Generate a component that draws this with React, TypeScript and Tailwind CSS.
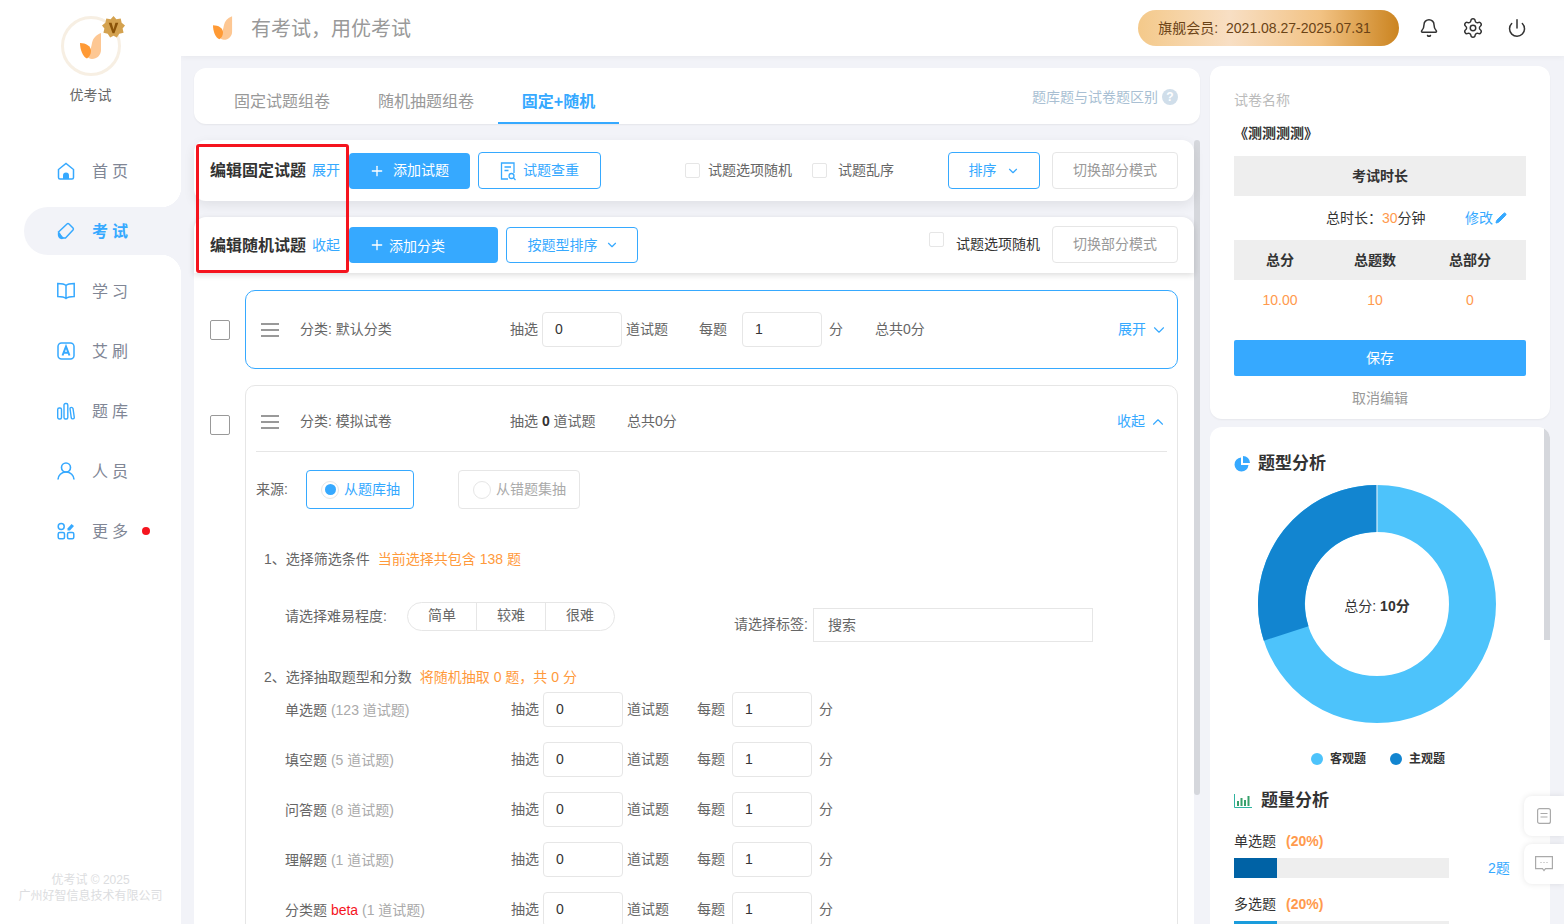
import { Bell, ChevronDown, ChevronUp, Pencil, Plus, Power, Settings } from "lucide-react";

const FONT = "font-['Liberation_Sans','Noto_Sans_CJK_SC',sans-serif]";

function Leaf({ w = 22, h = 26 }: { w?: number; h?: number }) {
  return (
    <svg width={w} height={h} viewBox="0 0 22 26">
      <path d="M21 0c-5 2-8 5-9 10-.7 4-1.500 8-5 13 1 2 3 3 5 3 5 0 9-4 9-9z" fill="#fdc793" />
      <path d="M0 10c6 0 11 3 11 8 0 3-1.500 6-4 7.500C3 24 0 17 0 10z" fill="#ff9a35" />
    </svg>
  );
}

function Logo() {
  return (
    <div className="relative flex h-[60px] w-[60px] items-center justify-center rounded-full border-[3px] border-[#f7efe3] bg-white">
      <Leaf />
      <svg className="absolute -right-[7px] -top-[3px]" width="23" height="23" viewBox="0 0 24 24">
        <path d="M12 0l3 3.500 4.500-1 1 4.500 3.500 3-2.500 3 1 4.500-4.500 1-2.500 4-3.500-2-3.500 2-2.500-4-4.500-1 1-4.500-2.500-3 3.500-3 1-4.500 4.500 1z" fill="#d4a24f" />
        <path d="M7 7h3l2 7 2-7h3l-4 11h-2z" fill="#8a5308" />
      </svg>
    </div>
  );
}

const ICON = "h-[18px] w-[18px] shrink-0 text-[#36a9ff]";

function NavIcon({ name }: { name: string }) {
  switch (name) {
    case "home":
      return (
        <svg className={ICON} viewBox="0 0 18 18" fill="none" stroke="currentColor" strokeWidth="1.500">
          <path d="M1.500 7.500L9 1.500l7.500 6v8a1.500 1.500 0 0 1-1.500 1.500H3a1.500 1.500 0 0 1-1.500-1.500z" />
          <path d="M6 17v-3.500a3 3 0 0 1 6 0V17z" fill="currentColor" stroke="none" />
        </svg>
      );
    case "exam":
      return (
        <svg className={ICON} viewBox="0 0 18 18" fill="none" stroke="currentColor" strokeWidth="1.500">
          <path d="M1.500 10L10 2a1.500 1.500 0 0 1 2 0l4 4a1.500 1.500 0 0 1 0 2l-7.500 8H5z" />
          <path d="M1 10l6 6-2 1.200c-2.500 0-5-2-4-7.200z" fill="currentColor" stroke="none" />
        </svg>
      );
    case "book":
      return (
        <svg className={ICON} viewBox="0 0 18 18" fill="none" stroke="currentColor" strokeWidth="1.500">
          <path d="M9 3.500C7.500 2 5 1.500.800 1.500v13c4 0 6.500.5 8.200 2 1.700-1.500 4.200-2 8.200-2v-13C13 1.500 10.500 2 9 3.500zM9 3.500v13" />
        </svg>
      );
    case "a":
      return (
        <svg className={ICON} viewBox="0 0 18 18" fill="none" stroke="currentColor" strokeWidth="1.500">
          <rect x="1" y="1" width="16" height="16" rx="3.500" />
          <path d="M5.500 13.500L9 4.500l3.500 9M6.800 10.800h4.400" strokeWidth="2" />
        </svg>
      );
    case "bars":
      return (
        <svg className={ICON} viewBox="0 0 18 18" fill="none" stroke="currentColor" strokeWidth="1.400">
          <rect x="0.700" y="6" width="3.800" height="11" rx="1.500" />
          <rect x="7" y="1.500" width="3.800" height="15.500" rx="1.500" />
          <path d="M13 6.500c0-1.500 2.500-1.500 3 0l1.300 9c0 1.500-2.500 2-3 .5z" />
        </svg>
      );
    case "user":
      return (
        <svg className={ICON} viewBox="0 0 18 18" fill="none" stroke="currentColor" strokeWidth="1.600">
          <circle cx="9" cy="5.500" r="4.500" />
          <path d="M1 17.500c0-4 3.500-7.500 8-7.500s8 3.500 8 7.500" />
        </svg>
      );
    default:
      return (
        <svg className={ICON} viewBox="0 0 18 18" fill="none" stroke="currentColor" strokeWidth="1.500">
          <circle cx="4.200" cy="4.500" r="3" />
          <rect x="1.200" y="10.500" width="6.300" height="6.300" rx="1.500" />
          <rect x="10.500" y="10.500" width="6.300" height="6.300" rx="1.500" />
          <path d="M10.500 6.500l4-4.500 2.500 2-4 4.500h-2.500z" fill="currentColor" stroke="none" />
        </svg>
      );
  }
}

const NAV = [
  { icon: "home", label: "首页" },
  { icon: "exam", label: "考试", active: true },
  { icon: "book", label: "学习" },
  { icon: "a", label: "艾刷" },
  { icon: "bars", label: "题库" },
  { icon: "user", label: "人员" },
  { icon: "more", label: "更多", dot: true },
];

function Sidebar() {
  return (
    <aside className="relative flex w-[181px] shrink-0 flex-col bg-white">
      <div className="flex flex-col items-center pt-[16px]">
        <Logo />
        <div className="mt-[9px] text-[14px] leading-[20px] text-[#666]">优考试</div>
      </div>
      <nav className="mt-[42px] flex flex-col pl-[24px]">
        {NAV.map((item) => (
          <div
            key={item.label}
            className={`relative mb-[12px] flex h-[48px] items-center gap-[17px] pl-[33px] ${
              item.active ? "rounded-l-[24px] bg-[#f2f3f8] font-bold text-[#36a9ff]" : "text-[#808695]"
            }`}
          >
            {item.active && (
              <>
                <span className="absolute -top-[20px] right-0 h-[20px] w-[20px] bg-[radial-gradient(circle_at_0_0,transparent_20px,#f2f3f8_20.500px)]" />
                <span className="absolute -bottom-[20px] right-0 h-[20px] w-[20px] bg-[radial-gradient(circle_at_0_100%,transparent_20px,#f2f3f8_20.500px)]" />
              </>
            )}
            <NavIcon name={item.icon} />
            <span className="pt-[2px] text-[16px] tracking-[4px]">{item.label}</span>
            {item.dot && <span className="-ml-[7px] h-[8px] w-[8px] rounded-full bg-[#f5141e]" />}
          </div>
        ))}
      </nav>
      <div className="mt-auto pb-[20px] text-center text-[12px] leading-[16px] text-[#dcdde0]">
        <div>优考试 © 2025</div>
        <div>广州好智信息技术有限公司</div>
      </div>
    </aside>
  );
}

function Header() {
  return (
    <header className="flex h-[56px] shrink-0 items-center bg-white pl-[32px] pr-[37px] shadow-[0_1px_6px_rgba(0,0,0,0.05)]">
      <Leaf w={20} h={24} />
      <span className="ml-[18px] pt-[2px] text-[20px] text-[#999]">有考试，用优考试</span>
      <div className="ml-auto flex h-[36px] w-[261px] items-center justify-center rounded-full bg-[linear-gradient(90deg,#f4c98a_0%,#f8dfc4_35%,#f2c283_70%,#cb8420_100%)] pr-[8px] text-[14px] text-[#6b4316]">
        旗舰会员:<span className="ml-[8px]">2021.08.27-2025.07.31</span>
      </div>
      <Bell className="ml-[20px] h-[20px] w-[20px] text-[#333]" strokeWidth={1.8} />
      <Settings className="ml-[23px] h-[22px] w-[22px] text-[#333]" strokeWidth={1.6} />
      <Power className="ml-[23px] h-[20px] w-[20px] text-[#333]" strokeWidth={1.8} />
    </header>
  );
}

function Tabs() {
  return (
    <div className="flex h-[56px] shrink-0 items-end rounded-xl bg-white pl-[28px] pr-[22px] shadow-[0_1px_2px_rgba(0,0,0,0.06)]">
      <div className="flex h-[44px] w-[120px] justify-center pt-[10px] text-[16px] text-[#999]">固定试题组卷</div>
      <div className="ml-[24px] flex h-[44px] w-[120px] justify-center pt-[10px] text-[16px] text-[#999]">随机抽题组卷</div>
      <div className="ml-[12px] flex h-[44px] w-[121px] justify-center border-b-2 border-[#36a9ff] pt-[10px] text-[16px] font-bold text-[#36a9ff]">固定+随机</div>
      <div className="ml-auto flex h-full items-center gap-[4px] pt-[2px] text-[14px] text-[#a9bfd3]">
        题库题与试卷题区别
        <span className="flex h-[16px] w-[16px] items-center justify-center rounded-full bg-[#d0deea] text-[12px] font-bold text-white">?</span>
      </div>
    </div>
  );
}

function Check({ label, gap, lift, dark }: { label: string; gap: string; lift?: boolean; dark?: boolean }) {
  return (
    <label className={`flex items-center text-[14px] ${gap} ${dark ? "text-[#333]" : "text-[#666]"}`}>
      <span className={`h-[15px] w-[15px] rounded-[2px] border border-[#e6e6e6] bg-white ${lift ? "mb-[10px]" : ""}`} />
      {label}
    </label>
  );
}

function OutlineBtn({ children, w }: { children: React.ReactNode; w: string }) {
  return (
    <button className={`flex items-center justify-center rounded-[4px] border border-[#36a9ff] text-[14px] text-[#36a9ff] ${w}`}>
      {children}
    </button>
  );
}

function SwitchBtn() {
  return (
    <button className="flex h-[37px] w-[126px] items-center justify-center rounded-[4px] border border-[#e6e6e6] text-[14px] text-[#999]">
      切换部分模式
    </button>
  );
}

function Toolbars() {
  return (
    <>
      <div className="relative z-10 flex h-[61px] shrink-0 items-center rounded-xl bg-white px-[16px] shadow-[0_4px_12px_rgba(0,0,0,0.08)]">
        <span className="w-[102px] text-[16px] font-bold text-[#333]">编辑固定试题</span>
        <span className="w-[37px] text-[14px] text-[#36a9ff]">展开</span>
        <button className="flex h-[36px] w-[121px] items-center gap-[8px] rounded-[4px] bg-[#36a9ff] pl-[20px] text-[14px] text-white">
          <Plus className="h-[16px] w-[16px]" />
          添加试题
        </button>
        <div className="ml-[8px]">
          <OutlineBtn w="h-[37px] w-[123px] gap-[5px] pr-[2px]">
            <svg width="20" height="20" viewBox="0 0 20 20" fill="none" stroke="currentColor" strokeWidth="1.300">
              <path d="M10 18H3.500V2h12.500v10M6.500 6h6.500M6.500 9.500h4" />
              <circle cx="13.500" cy="15" r="2.500" />
              <path d="M15.500 17l2 2" />
            </svg>
            试题查重
          </OutlineBtn>
        </div>
        <div className="ml-[84px]"><Check label="试题选项随机" gap="gap-[8px]" /></div>
        <div className="ml-[20px]"><Check label="试题乱序" gap="gap-[11px]" /></div>
        <div className="ml-[54px]">
          <OutlineBtn w="h-[37px] w-[92px] gap-[9px]">
            排序
            <ChevronDown className="h-[14px] w-[14px]" />
          </OutlineBtn>
        </div>
        <div className="ml-[12px]"><SwitchBtn /></div>
      </div>
      <div className="relative z-10 mt-[16px] flex h-[56px] shrink-0 items-center rounded-t-xl bg-white px-[16px] pb-[1px] shadow-[0_2px_6px_rgba(0,0,0,0.14)]">
        <span className="w-[102px] pt-[2px] text-[16px] font-bold text-[#333]">编辑随机试题</span>
        <span className="w-[37px] pt-[2px] text-[14px] text-[#36a9ff]">收起</span>
        <button className="flex h-[36px] w-[149px] items-center gap-[4px] rounded-[4px] bg-[#36a9ff] pl-[20px] text-[14px] text-white">
          <Plus className="h-[16px] w-[16px]" />
          <span className="pt-[3px]">添加分类</span>
        </button>
        <div className="ml-[8px]">
          <OutlineBtn w="h-[36px] w-[132px] gap-[7px] pl-[2px]">
            <span className="pt-[2px]">按题型排序</span>
            <ChevronDown className="h-[14px] w-[14px]" />
          </OutlineBtn>
        </div>
        <div className="ml-auto"><Check label="试题选项随机" gap="gap-[12px]" lift dark /></div>
        <div className="ml-[12px]"><SwitchBtn /></div>
      </div>
    </>
  );
}

function Menu() {
  return (
    <div className="flex w-[18px] shrink-0 flex-col gap-[4px]">
      <span className="h-[2px] bg-[#999]" />
      <span className="h-[2px] bg-[#999]" />
      <span className="h-[2px] bg-[#999]" />
    </div>
  );
}

function Box() {
  return <div className="h-[20px] w-[20px] shrink-0 rounded-[2px] border border-[#999] bg-white" />;
}

function Num({ value }: { value: string }) {
  return (
    <div className="flex h-[35px] w-[80px] items-center rounded-[4px] border border-[#e6e6e6] pl-[12px] text-[14px] text-[#333]">
      {value}
    </div>
  );
}

const TYPES = [
  { name: "单选题", count: "(123 道试题)" },
  { name: "填空题", count: "(5 道试题)" },
  { name: "问答题", count: "(8 道试题)" },
  { name: "理解题", count: "(1 道试题)" },
  { name: "分类题", beta: true, count: "(1 道试题)" },
];

function TypeRow({ name, count, beta }: { name: string; count: string; beta?: boolean }) {
  return (
    <div className="flex h-[35px] items-center text-[14px] text-[#666]">
      <div className="w-[226px] pt-[2px]">
        {name}
        {beta && <span className="text-[#f5141e]"> beta</span>}
        <span className="text-[#aaa]"> {count}</span>
      </div>
      <span className="w-[32px]">抽选</span>
      <Num value="0" />
      <span className="ml-[4px] w-[70px]">道试题</span>
      <span className="w-[35px]">每题</span>
      <Num value="1" />
      <span className="ml-[7px]">分</span>
    </div>
  );
}

function Content() {
  return (
    <div className="min-h-0 flex-1 overflow-hidden bg-white pt-[17px]">
      <div className="flex pl-[16px]">
        <div className="flex h-[79px] w-[35px] shrink-0 items-center"><Box /></div>
        <div className="flex h-[79px] w-[933px] items-center rounded-[10px] border border-[#36a9ff] pl-[15px] pr-[9px] text-[14px] text-[#666]">
          <Menu />
          <span className="ml-[21px] w-[210px]">分类: 默认分类</span>
          <span className="w-[32px]">抽选</span>
          <Num value="0" />
          <span className="ml-[4px] w-[73px]">道试题</span>
          <span className="w-[43px]">每题</span>
          <Num value="1" />
          <span className="ml-[7px] w-[46px]">分</span>
          <span>总共0分</span>
          <span className="ml-auto flex items-center gap-[4px] text-[#36a9ff]">
            展开
            <ChevronDown className="h-[18px] w-[18px]" strokeWidth={1.5} />
          </span>
        </div>
      </div>
      <div className="mt-[16px] flex pl-[16px]">
        <div className="w-[35px] shrink-0 pt-[30px]"><Box /></div>
        <div className="w-[933px] rounded-t-[10px] border border-[#e6e6e6] px-[10px]">
          <div className="flex h-[66px] items-center border-b border-[#e6e6e6] pl-[5px] pt-[6px] text-[14px] text-[#666]">
            <Menu />
            <span className="ml-[21px] w-[210px]">分类: 模拟试卷</span>
            <span className="w-[117px]">抽选 <b className="text-[#333]">0</b> 道试题</span>
            <span>总共0分</span>
            <span className="ml-auto flex items-center gap-[4px] text-[#36a9ff]">
              收起
              <ChevronUp className="h-[18px] w-[18px]" strokeWidth={1.5} />
            </span>
          </div>
          <div className="mt-[18px] flex items-center text-[14px]">
            <span className="w-[50px] text-[#666]">来源:</span>
            <div className="flex h-[39px] w-[108px] items-center rounded-[4px] border border-[#36a9ff] pl-[14px] text-[#36a9ff]">
              <span className="mr-[5px] flex h-[18px] w-[18px] items-center justify-center rounded-full border border-[#e6e6e6]">
                <span className="h-[11px] w-[11px] rounded-full bg-[#36a9ff]" />
              </span>
              从题库抽
            </div>
            <div className="ml-[44px] flex h-[39px] w-[122px] items-center rounded-[4px] border border-[#e6e6e6] pl-[14px] text-[#aaa]">
              <span className="mr-[5px] h-[18px] w-[18px] rounded-full border border-[#e6e6e6]" />
              从错题集抽
            </div>
          </div>
          <div className="mt-[41px] pl-[8px] text-[14px] leading-[18px] text-[#666]">
            1、选择筛选条件
            <span className="ml-[8px] text-[#ff9a3c]">当前选择共包含 138 题</span>
          </div>
          <div className="mt-[34px] flex h-[40px] items-start pl-[29px] text-[14px] text-[#666]">
            <span className="w-[122px] leading-[29px]">请选择难易程度:</span>
            <div className="flex h-[29px] w-[208px] rounded-full border border-[#e6e6e6] text-center leading-[25px]">
              <span className="flex-1 border-r border-[#e6e6e6]">简单</span>
              <span className="flex-1 border-r border-[#e6e6e6]">较难</span>
              <span className="flex-1">很难</span>
            </div>
            <span className="ml-[119px] mt-[13px] w-[79px] leading-[18px]">请选择标签:</span>
            <div className="mt-[6px] flex h-[34px] w-[280px] items-center border border-[#e6e6e6] pl-[14px]">搜索</div>
          </div>
          <div className="mt-[26px] pl-[8px] text-[14px] leading-[18px] text-[#666]">
            2、选择抽取题型和分数
            <span className="ml-[8px] text-[#ff9a3c]">将随机抽取 0 题，共 0 分</span>
          </div>
          <div className="mt-[6px] flex flex-col gap-[15px] pl-[29px]">
            {TYPES.map((t) => (
              <TypeRow key={t.name} {...t} />
            ))}
          </div>
        </div>
      </div>
    </div>
  );
}

function Summary() {
  return (
    <div className="h-[353px] shrink-0 rounded-xl bg-white px-[24px] pt-[25px] text-[14px] shadow-[0_1px_2px_rgba(0,0,0,0.05)]">
      <div className="leading-[18px] text-[#bbb]">试卷名称</div>
      <div className="mt-[15px] font-bold leading-[18px] text-[#333]">《测测测测》</div>
      <div className="mt-[14px] flex h-[40px] items-center justify-center bg-[#eee] font-bold text-[#333]">考试时长</div>
      <div className="relative flex h-[44px] items-center pl-[92px] text-[#333]">
        总时长：<span className="text-[#ff9a4d]">30</span>分钟
        <span className="absolute left-[231px] flex items-center gap-[2px] text-[#36a9ff]">
          修改
          <Pencil className="h-[12px] w-[12px]" fill="currentColor" />
        </span>
      </div>
      <div className="flex h-[40px] items-center bg-[#eee] font-bold text-[#333]">
        <span className="w-[92px] text-center">总分</span>
        <span className="w-[98px] text-center">总题数</span>
        <span className="w-[92px] text-center">总部分</span>
      </div>
      <div className="flex h-[40px] items-center text-[#ff9a4d]">
        <span className="w-[92px] text-center">10.00</span>
        <span className="w-[98px] text-center">10</span>
        <span className="w-[92px] text-center">0</span>
      </div>
      <div className="mt-[20px] flex h-[36px] items-center justify-center rounded-[2px] bg-[#36a9ff] text-white">保存</div>
      <div className="mt-[13px] text-center leading-[18px] text-[#999]">取消编辑</div>
    </div>
  );
}

function Donut() {
  return (
    <div className="relative ml-[23px] mt-[9px] flex h-[240px] w-[240px] items-center justify-center">
      <svg className="absolute inset-0" width="240" height="240" viewBox="0 0 240 240">
        <circle cx="120" cy="120" r="95.500" fill="none" stroke="#4dc3fb" strokeWidth="47" />
        <circle
          cx="120"
          cy="120"
          r="95.500"
          fill="none"
          stroke="#1285d0"
          strokeWidth="47"
          strokeDasharray="180 600"
          transform="rotate(162 120 120)"
        />
        <path d="M120 1v47" stroke="#fff" strokeWidth="1" />
      </svg>
      <span className="relative pt-[4px] text-[14px] text-[#333]">总分: <b>10分</b></span>
    </div>
  );
}

function Bar({ label, pct, fill, count }: { label: string; pct: string; fill: string; count: string }) {
  return (
    <div>
      <div className="text-[14px] leading-[18px] text-[#333]">
        {label}
        <b className="ml-[10px] text-[#ff9a4d]">{pct}</b>
      </div>
      <div className="mt-[8px] flex h-[20px] items-center">
        <div className="h-[20px] w-[215px] bg-[#eee]">
          <div className={`h-full w-[43px] ${fill}`} />
        </div>
        <span className="ml-[39px] text-[14px] text-[#36a9ff]">{count}</span>
      </div>
    </div>
  );
}

function Analysis() {
  return (
    <div className="relative mt-[8px] min-h-0 flex-1 overflow-hidden rounded-t-xl bg-white px-[24px] pt-[26px]">
      <span className="absolute right-0 top-0 h-[213px] w-[6px] bg-[#d5d7dc]" />
      <div className="flex items-center gap-[8px] text-[17px] font-bold leading-[22px] text-[#333]">
        <svg width="16" height="16" viewBox="0 0 16 16">
          <path d="M7 1.500A7 7 0 1 0 14.500 9H7z" fill="#36a9ff" />
          <path d="M9 0a7 7 0 0 1 7 7H9z" fill="#36a9ff" />
        </svg>
        题型分析
      </div>
      <Donut />
      <div className="mt-[27px] flex items-center justify-center gap-[24px] pr-[4px] text-[12px] font-bold leading-[16px] text-[#333]">
        <span className="flex items-center gap-[7px]"><i className="h-[12px] w-[12px] rounded-full bg-[#4dc3fb]" />客观题</span>
        <span className="flex items-center gap-[7px]"><i className="h-[12px] w-[12px] rounded-full bg-[#1285d0]" />主观题</span>
      </div>
      <div className="mt-[22px] flex items-center gap-[9px] text-[17px] font-bold leading-[24px] text-[#333]">
        <svg width="18" height="16" viewBox="0 0 18 16" fill="none">
          <path d="M.500 1v13.500H18" stroke="#2fb3a0" strokeWidth="1" />
          <path d="M4 8v5M7.500 5v8M11 7v6M14.500 3v10" stroke="#36a06b" strokeWidth="2" />
        </svg>
        题量分析
      </div>
      <div className="mt-[19px] flex flex-col gap-[17px]">
        <Bar label="单选题" pct="(20%)" fill="bg-[#0062a5]" count="2题" />
        <Bar label="多选题" pct="(20%)" fill="bg-[#1a9cdc]" count="" />
      </div>
    </div>
  );
}

export default function App() {
  return (
    <div className={`relative flex h-[924px] w-[1564px] overflow-hidden bg-[#f2f3f8] ${FONT}`}>
      <Sidebar />
      <div className="flex min-w-0 flex-1 flex-col">
        <Header />
        <div className="flex min-h-0 flex-1 pl-[13px] pr-[14px]">
          <main className="flex min-h-0 w-[1006px] shrink-0 flex-col pt-[12px]">
            <Tabs />
            <div className="relative mt-[16px] flex min-h-0 flex-1 flex-col pr-[6px]">
              <span className="absolute right-0 top-0 h-[655px] w-[6px] rounded-[3px] bg-[#d5d7dc]" />
              <Toolbars />
              <Content />
              <span className="pointer-events-none absolute left-[2px] top-[4px] z-20 h-[129px] w-[153px] rounded-[3px] border-[3px] border-[#f5141e]" />
            </div>
          </main>
          <section className="ml-[10px] flex min-h-0 w-[340px] shrink-0 flex-col pt-[10px]">
            <Summary />
            <Analysis />
          </section>
        </div>
      </div>
      <div className="absolute right-0 top-[796px] flex flex-col gap-[8px]">
        <div className="flex h-[40px] w-[40px] items-center justify-center rounded-l-lg bg-white shadow-[0_0_6px_rgba(0,0,0,0.1)]">
          <svg width="14" height="16" viewBox="0 0 14 16" fill="none" stroke="#aaa" strokeWidth="1.200">
            <rect x=".600" y=".600" width="12.800" height="14.800" rx="2" />
            <path d="M3.500 5.500h7M3.500 9h7" />
          </svg>
        </div>
        <div className="flex h-[40px] w-[40px] items-center justify-center rounded-l-lg bg-white shadow-[0_0_6px_rgba(0,0,0,0.1)]">
          <svg width="18" height="16" viewBox="0 0 18 16" fill="none" stroke="#aaa" strokeWidth="1.200">
            <path d="M.600.600h16.800v12H10.500L9 14.500 7.500 12.600H.600z" />
            <path d="M5.500 6.500h1M8.500 6.500h1M11.500 6.500h1" />
          </svg>
        </div>
      </div>
    </div>
  );
}
